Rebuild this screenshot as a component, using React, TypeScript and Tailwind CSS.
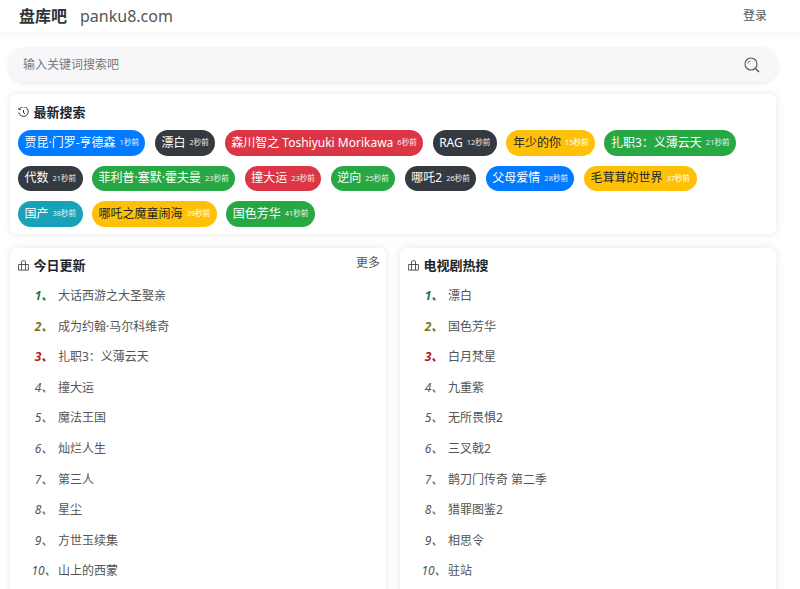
import React from "react";

type Tone = "blue" | "dark" | "red" | "yellow" | "green" | "cyan";

const toneClass: Record<Tone, string> = {
  blue: "bg-[#007bff] text-white",
  dark: "bg-[#343a40] text-white",
  red: "bg-[#dc3545] text-white",
  yellow: "bg-[#ffc107] text-[#212529]",
  green: "bg-[#28a745] text-white",
  cyan: "bg-[#17a2b8] text-white",
};

const rows: [string, string, Tone][][] = [
  [
    ["贾昆·门罗-亨德森", "1秒前", "blue"],
    ["漂白", "2秒前", "dark"],
    ["森川智之 Toshiyuki Morikawa", "6秒前", "red"],
    ["RAG", "12秒前", "dark"],
    ["年少的你", "15秒前", "yellow"],
    ["扎职3：义薄云天", "21秒前", "green"],
  ],
  [
    ["代数", "21秒前", "dark"],
    ["菲利普·塞默·霍夫曼", "23秒前", "green"],
    ["撞大运", "23秒前", "red"],
    ["逆向", "25秒前", "green"],
    ["哪吒2", "26秒前", "dark"],
    ["父母爱情", "28秒前", "blue"],
    ["毛茸茸的世界", "37秒前", "yellow"],
  ],
  [
    ["国产", "38秒前", "cyan"],
    ["哪吒之魔童闹海", "39秒前", "yellow"],
    ["国色芳华", "41秒前", "green"],
  ],
];

const today = ["大话西游之大圣娶亲", "成为约翰·马尔科维奇", "扎职3：义薄云天", "撞大运", "魔法王国", "灿烂人生", "第三人", "星尘", "方世玉续集", "山上的西蒙"];
const tv = ["漂白", "国色芳华", "白月梵星", "九重紫", "无所畏惧2", "三叉戟2", "鹊刀门传奇 第二季", "猎罪图鉴2", "相思令", "驻站"];

const rankColor = (i: number) =>
  i === 0 ? "text-[#1a7a3c] font-bold" : i === 1 ? "text-[#7f7010] font-bold" : i === 2 ? "text-[#b8141e] font-bold" : "text-[#555]";

function CardIcon() {
  return (
    <svg width="11" height="11" viewBox="0 0 11 11" fill="none" stroke="#444" strokeWidth="0.9" className="shrink-0">
      <path d="M0.6 4.5h9.8v5.6H0.6z" />
      <path d="M3.5 4.5V1.6a0.8 0.8 0 0 1 0.8-0.8h2.4a0.8 0.8 0 0 1 0.8 0.8v2.9" />
      <path d="M3.5 4.5v5.6M7.5 4.5v5.6" />
    </svg>
  );
}

function RankList({ title, items, more }: { title: string; items: string[]; more?: boolean }) {
  return (
    <section className="flex-1 h-[360px] bg-white rounded-md shadow-[0_0_8px_rgba(0,0,0,0.1)] pl-2 pr-[6px]">
      <div className="flex items-start h-[33px]">
        <div className="flex items-center gap-[4.5px] mt-[9px]">
          <CardIcon />
          <h3 className="text-[13px] leading-[17px] font-bold text-[#212529]">{title}</h3>
        </div>
        {more && <span className="ml-auto mt-[6px] text-[12px] leading-[18px] text-[#555]">更多</span>}
      </div>
      <ol>
        {items.map((t, i) => (
          <li key={t} className="flex items-center h-[30.55px] text-[12px] text-[#555]">
            <span className={`ml-[14px] -translate-x-[1px] w-[26px] text-center italic whitespace-nowrap ${rankColor(i)}`}>
              {i + 1}、
            </span>
            <span>{t}</span>
          </li>
        ))}
      </ol>
    </section>
  );
}

export default function App() {
  return (
    <div className="h-[589px] overflow-hidden bg-white font-['Noto_Sans','Noto_Sans_CJK_SC',sans-serif]">
      <header className="h-[32px] flex items-center pl-[19px] pr-[33px] shadow-[0_2px_8px_rgba(0,0,0,0.05)]">
        <span className="text-[16px] font-bold text-[#333]">盘库吧</span>
        <span className="ml-[13px] text-[16px] text-[#555]">panku8.com</span>
        <span className="ml-auto text-[12px] text-[#555]">登录</span>
      </header>

      <div className="pl-[10px] pr-[24px]">
        <div className="mt-[15px] -ml-[2px] -mr-[2px] h-[35px] flex items-center pl-[15px] pr-[18px] rounded-[17.5px] bg-[#f7f7f9] shadow-[0_2px_4px_rgba(0,0,0,0.08)]">
          <span className="text-[12px] text-[#777]">输入关键词搜索吧</span>
          <svg width="16" height="16" viewBox="0 0 16 16" fill="none" stroke="#555" strokeWidth="1.1" className="ml-auto">
            <circle cx="7" cy="7" r="6" />
            <path d="M11.5 11.5L15 15" strokeWidth="1.4" />
            <path d="M3.8 6.5A3.4 3.4 0 0 1 6.5 3.8" strokeWidth="0.8" />
          </svg>
        </div>

        <section className="mt-[12px] h-[140px] bg-white rounded-md shadow-[0_0_8px_rgba(0,0,0,0.1)] pl-2 pt-[10px]">
          <div className="flex items-center gap-[4.5px] h-[17px]">
            <svg width="11" height="11" viewBox="0 0 11 11" fill="none" stroke="#333" strokeWidth="1">
              <path d="M1.6 1.8A4.8 4.8 0 1 1 0.8 5.5" />
              <path d="M0.9 0.8v1.8h1.8" />
              <path d="M5.5 3V5.8l1.6 1" />
            </svg>
            <h3 className="text-[13px] leading-[17px] font-bold text-[#212529]">最新搜索</h3>
          </div>
          <div className="mt-[9px] flex flex-col gap-[10px]">
            {rows.map((row, r) => (
              <div key={r} className="flex gap-[9.5px]">
                {row.map(([name, time, tone]) => (
                  <span key={name} className={`h-[25.5px] rounded-full flex items-center gap-[4px] pl-[6.5px] pr-[6.5px] whitespace-nowrap ${toneClass[tone]}`}>
                    <span className="text-[12px]">{name}</span>
                    <span className={`text-[7.5px] ${tone === "yellow" ? "text-white" : "opacity-90"}`}>{time}</span>
                  </span>
                ))}
              </div>
            ))}
          </div>
        </section>

        <div className="mt-[14px] flex gap-[14px]">
          <RankList title="今日更新" items={today} more />
          <RankList title="电视剧热搜" items={tv} />
        </div>
      </div>
    </div>
  );
}
